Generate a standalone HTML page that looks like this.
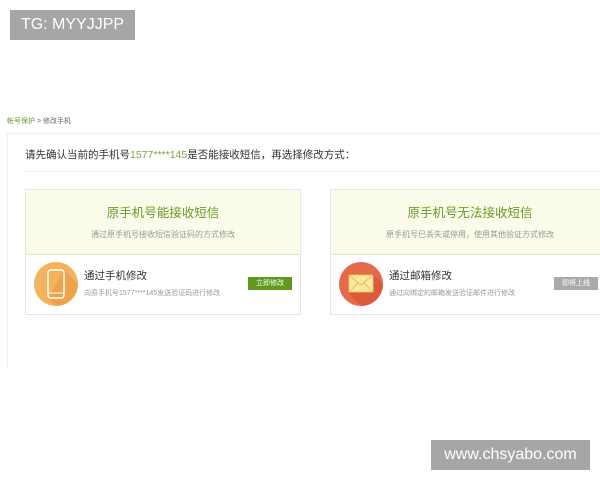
<!DOCTYPE html>
<html><head><meta charset="utf-8"><style>
body{margin:0;width:600px;height:480px;background:#fff;position:relative;overflow:hidden;font-family:"Liberation Sans","Noto Sans CJK SC",sans-serif;}
.a{position:absolute;}
.wm{background:#a6a6a6;color:#fff;font-size:16px;line-height:30px;text-align:center;}
.card{position:absolute;top:189px;height:126px;border:1px solid #e6e6e6;box-sizing:border-box;background:#fff;}
.head{height:64px;background:#fbfbea;border-bottom:1px solid #e8e6c0;text-align:center;}
.head .t{color:#6a9a2a;font-size:12.5px;padding-top:15px;line-height:16px;}
.head .s{color:#999;font-size:8px;margin-top:8px;}
.tt{font-size:10.5px;color:#333;}
.ss{font-size:7px;color:#999;}
.btn{font-size:7px;color:#fff;text-align:center;line-height:13px;width:44px;height:13px;}
</style></head><body>
<div class="a wm" style="left:10px;top:10px;width:125px;height:30px;">TG: MYYJJPP</div>
<div class="a wm" style="left:431px;top:440px;width:159px;height:30px;">www.chsyabo.com</div>
<div class="a" style="left:7px;top:116px;font-size:7px;color:#666;"><span style="color:#6a9a2a">帐号保护</span> &gt; 修改手机</div>
<div class="a" style="left:7px;top:133px;width:600px;height:233px;border-left:1px solid #eee;border-top:1px solid #eee;"></div>
<div class="a" style="left:25px;top:147px;font-size:10.5px;color:#333;">请先确认当前的手机号<span style="color:#7aa53a">1577****145</span>是否能接收短信，再选择修改方式：</div>
<div class="a" style="left:25px;top:171px;width:575px;height:1px;background:#eee;"></div>

<div class="card" style="left:25px;width:276px;">
<div class="head"><div class="t">原手机号能接收短信</div><div class="s">通过原手机号接收短信验证码的方式修改</div></div>
<svg class="a" style="left:8px;top:72px" width="44" height="44"><circle cx="22" cy="22" r="22" fill="#f3b25c"/><path d="M22 44A22 22 0 0 0 44 22L30 8 14 36z" fill="#eea24a"/><rect x="14" y="8" width="16" height="28" rx="2.5" fill="none" stroke="#fff" stroke-width="1.5"/><line x1="14" y1="31" x2="30" y2="31" stroke="#fff" stroke-width="1"/></svg>
<div class="a tt" style="left:58px;top:78px;">通过手机修改</div>
<div class="a ss" style="left:58px;top:98px;">向原手机号1577****145发送验证码进行修改</div>
<div class="a btn" style="left:222px;top:87px;background:#5f9a1e;">立即修改</div>
</div>

<div class="card" style="left:330px;width:280px;">
<div class="head"><div class="t">原手机号无法接收短信</div><div class="s">原手机号已丢失或停用，使用其他验证方式修改</div></div>
<svg class="a" style="left:8px;top:72px" width="44" height="44"><circle cx="22" cy="22" r="22" fill="#e46a4c"/><path d="M22 44A22 22 0 0 0 44 22L34 12 10 32z" fill="#dc5a3a"/><rect x="10" y="13" width="24" height="17" fill="#fbe89a" stroke="#e8c870" stroke-width="0.8"/><path d="M10 13L22 23 34 13M10 30L19 21M34 30L25 21" fill="none" stroke="#d8b060" stroke-width="0.8"/></svg>
<div class="a tt" style="left:58px;top:78px;">通过邮箱修改</div>
<div class="a ss" style="left:58px;top:98px;">通过向绑定的邮箱发送验证邮件进行修改</div>
<div class="a btn" style="left:223px;top:87px;background:#aaa;">即将上线</div>
</div>
</body></html>
